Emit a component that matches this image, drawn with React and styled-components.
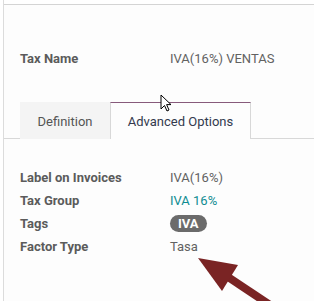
import React from 'react'
import styled, { createGlobalStyle } from 'styled-components'

const GlobalStyle = createGlobalStyle`
  html, body {
    margin: 0;
    background: #ffffff;
    font-family: Roboto, "Noto Sans", sans-serif;
    font-size: 13px;
    overflow: hidden;
  }
`

const Page = styled.div`
  position: relative;
  width: 314px;
  height: 301px;
  padding-left: 3px;
  box-sizing: border-box;
`

const Sheet = styled.div`
  height: 100%;
  border-left: 1px solid #dcdcdc;
  padding-top: 4px;
  box-sizing: border-box;
`

const Inner = styled.div`
  border-top: 1px solid #d4d4d4;
  background: #fdfdfd;
  height: 100%;
`

const Title = styled.div`
  display: flex;
  align-items: center;
  padding: 44px 0 0 16px;
  height: 18px;
`

const Label = styled.div`
  width: 150px;
  font-weight: bold;
  color: #5b5b5b;
`

const Value = styled.div`
  color: ${p => (p.$link ? '#0f8c92' : '#626262')};
`

const Tabs = styled.div`
  display: flex;
  margin-top: 35px;
  padding-left: 16px;
  border-bottom: 1px solid #d8d8d8;
`

const Tab = styled.div`
  height: 37px;
  box-sizing: border-box;
  display: flex;
  align-items: center;
  justify-content: center;
  padding: 0 16px;
  color: ${p => (p.$active ? '#333a4d' : '#555')};
  background: ${p => (p.$active ? '#fdfdfd' : '#f4f4f4')};
  border-top: 1px solid ${p => (p.$active ? '#875a7b' : 'transparent')};
  border-left: 1px solid ${p => (p.$active ? '#d8d8d8' : 'transparent')};
  border-right: 1px solid ${p => (p.$active ? '#d8d8d8' : 'transparent')};
  margin-bottom: -1px;
  width: ${p => p.$w}px;
`

const Fields = styled.div`
  display: flex;
  flex-direction: column;
  padding: 27px 0 0 16px;
`

const Row = styled.div`
  display: flex;
  align-items: center;
  height: 23px;
`

const Pill = styled.span`
  display: inline-block;
  background: #6b6b6b;
  color: #fff;
  font-weight: bold;
  border-radius: 9px;
  padding: 1px 8px;
  line-height: 15px;
`

const Cursor = styled.svg`
  position: absolute;
  left: 160px;
  top: 94px;
`

const Arrow = styled.svg`
  position: absolute;
  left: 0;
  top: 0;
  pointer-events: none;
`

export default function App() {
  return (
    <Page>
      <GlobalStyle />
      <Sheet>
        <Inner>
          <Title>
            <Label>Tax Name</Label>
            <Value>IVA(16%) VENTAS</Value>
          </Title>
          <Tabs>
            <Tab $w={90}>Definition</Tab>
            <Tab $active $w={141}>Advanced Options</Tab>
          </Tabs>
          <Fields>
            <Row>
              <Label>Label on Invoices</Label>
              <Value>IVA(16%)</Value>
            </Row>
            <Row>
              <Label>Tax Group</Label>
              <Value $link>IVA 16%</Value>
            </Row>
            <Row>
              <Label>Tags</Label>
              <Pill>IVA</Pill>
            </Row>
            <Row>
              <Label>Factor Type</Label>
              <Value>Tasa</Value>
            </Row>
          </Fields>
        </Inner>
      </Sheet>
      <Cursor width="14" height="20" viewBox="0 0 14 20">
        <path d="M1 1 L1 15 L4.5 11.5 L7 17 L9 16 L6.6 10.6 L11 10.6 Z" fill="#fff" stroke="#000" strokeWidth="1" strokeLinejoin="round" />
      </Cursor>
      <Arrow width="314" height="301" viewBox="0 0 314 301">
        <line x1="222" y1="273" x2="285" y2="315" stroke="#7a2424" strokeWidth="8" />
        <polygon points="198,258 238,265 222,291" fill="#7a2424" />
      </Arrow>
    </Page>
  )
}
